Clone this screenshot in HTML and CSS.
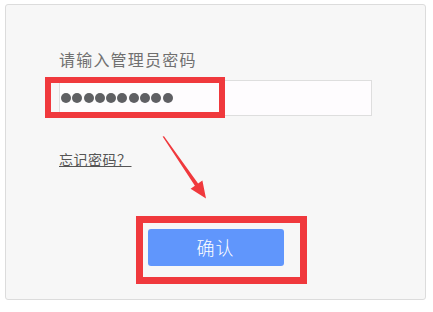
FILE: index.html
```html
<!DOCTYPE html>
<html lang="zh">
<head>
<meta charset="utf-8">
<link rel="stylesheet" href="styles.css">
</head>
<body>
<div class="panel">
  <div class="label">请输入管理员密码</div>
  <div class="field-wrap">
    <div class="field">
      <div class="dots">
        <span></span><span></span><span></span><span></span><span></span>
        <span></span><span></span><span></span><span></span><span></span>
      </div>
    </div>
    <div class="frame frame-input"></div>
  </div>
  <a class="forgot" href="#">忘记密码？</a>
  <div class="btn-wrap">
    <button class="btn">确认</button>
    <div class="frame frame-btn"></div>
  </div>
  <svg class="arrow" width="420" height="295" viewBox="0 0 420 295">
    <polygon points="157.6,132.6 159,132.2 193.1,179.4 197.4,176.4 201,194.5 185.6,184.8 189.9,181.8" fill="#f0393d"/>
  </svg>
</div>
</body>
</html>
```
FILE: styles.css
```css
html, body {
  margin: 0;
  padding: 0;
  background: #ffffff;
}
body {
  font-family: "Noto Sans CJK SC", "Liberation Sans", sans-serif;
  width: 433px;
  height: 312px;
  overflow: hidden;
}
.panel {
  position: relative;
  box-sizing: border-box;
  width: 421px;
  height: 296px;
  margin: 4px 0 0 5px;
  padding-top: 44px;
  background: #f7f7f7;
  border: 1px solid #dcdcdc;
  border-radius: 3px;
  display: flex;
  flex-direction: column;
  align-items: flex-start;
}
.label {
  margin-left: 53px;
  font-size: 16px;
  line-height: 20px;
  color: #707070;
  letter-spacing: 1.2px;
}
.field-wrap {
  position: relative;
  margin: 11px 0 0 53px;
}
.field {
  box-sizing: border-box;
  width: 313px;
  height: 36px;
  background: #fefcfe;
  border: 1px solid #dedede;
  display: flex;
  align-items: center;
  padding-left: 1px;
}
.dots {
  display: flex;
  gap: 1.3px;
}
.dots span {
  width: 10px;
  height: 10px;
  border-radius: 50%;
  background: #5f5f63;
}
.frame {
  position: absolute;
  box-sizing: border-box;
  border: 6px solid #f0393d;
  pointer-events: none;
}
.frame-input {
  left: -14px;
  top: -3px;
  width: 180px;
  height: 41px;
}
.forgot {
  margin: 33px 0 0 53px;
  font-size: 14px;
  line-height: 20px;
  color: #555555;
  text-decoration: underline;
  letter-spacing: 0.5px;
}
.btn-wrap {
  position: relative;
  align-self: center;
  margin-top: 60px;
}
.btn {
  display: block;
  width: 136px;
  height: 37px;
  padding: 0;
  border: none;
  border-radius: 3px;
  background: #6096fc;
  color: #ffffff;
  font-family: "Noto Sans CJK SC", "Liberation Sans", sans-serif;
  font-size: 18px;
  font-weight: 300;
  line-height: 37px;
  letter-spacing: 1px;
}
.frame-btn {
  left: -12px;
  top: -13px;
  width: 171px;
  height: 68px;
  border-width: 7px;
}
.arrow {
  position: absolute;
  left: -1px;
  top: -1px;
  pointer-events: none;
}
```
